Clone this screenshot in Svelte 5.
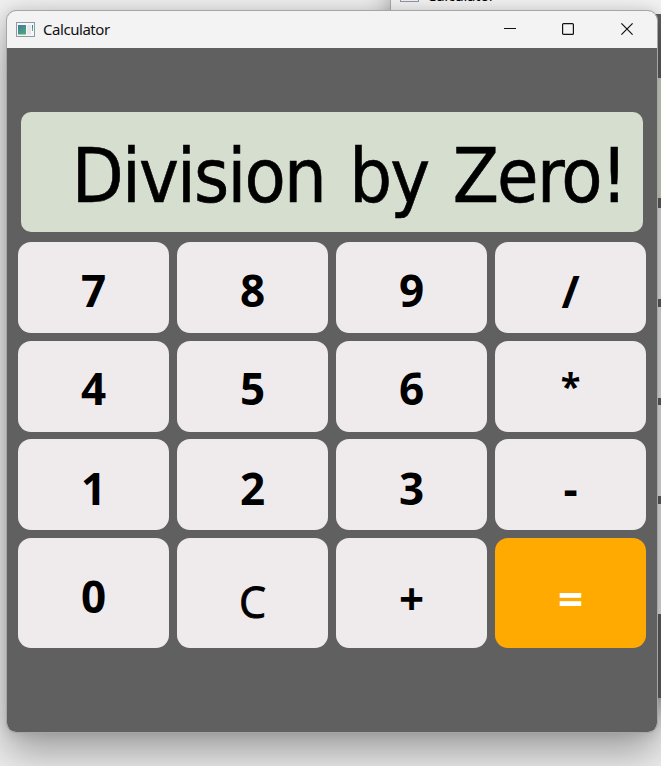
<script>
  const keys = [
    { label: '7' }, { label: '8' }, { label: '9' }, { label: '/', kind: 'slash' },
    { label: '4' }, { label: '5' }, { label: '6' }, { label: '*', kind: 'star' },
    { label: '1', kind: 'low' }, { label: '2', kind: 'low' }, { label: '3', kind: 'low' }, { label: '-', kind: 'minus' },
    { label: '0', kind: 'low' }, { label: 'C', kind: 'clear' }, { label: '+', kind: 'plus' }, { label: '=', kind: 'equals' }
  ];
</script>

<main class="desktop">
  <div class="rear" aria-hidden="true">
    <div class="rear-title">
      <span class="rear-icon"></span><span>Calculator</span>
    </div>
    <div class="rear-body">
      <i class="rear-display"></i>
      <i class="rear-key"></i>
      <i class="rear-key"></i>
      <i class="rear-key"></i>
      <i class="rear-key last"></i>
    </div>
  </div>

  <section class="window">
    <header class="titlebar">
      <svg class="app-icon" width="19" height="15" viewBox="0 0 19 15">
        <defs>
          <linearGradient id="tile" x1="0" y1="0" x2="0.6" y2="1">
            <stop offset="0" stop-color="#3d78a5" />
            <stop offset="1" stop-color="#4da777" />
          </linearGradient>
        </defs>
        <rect x=".5" y=".5" width="18" height="14" fill="#f4f6f7" stroke="#9297a2" />
        <rect x="2" y="3" width="8" height="9.5" fill="url(#tile)" />
        <rect x="11" y="3" width="4" height="9.5" fill="#e5e7e9" />
        <rect x="16" y="3" width="1" height="3" fill="#397fb5" />
        <rect x="16" y="6" width="1" height="3" fill="#57ad76" />
      </svg>
      <h1>Calculator</h1>
      <div class="controls">
        <svg width="12" height="12" viewBox="0 0 12 12"><path d="M0 5.5H12" /></svg>
        <svg width="12" height="12" viewBox="0 0 12 12"><rect x=".6" y=".6" width="10.8" height="10.8" rx="1" /></svg>
        <svg width="12" height="12" viewBox="0 0 12 12"><path d="M.4 .4L11.6 11.6M11.6 .4L.4 11.6" /></svg>
      </div>
    </header>
    <div class="body">
      <output class="display"><span>Division by Zero!</span></output>
      <div class="keypad">
        {#each keys as key}
          <button class={key.kind ?? 'plain'}><span>{key.label}</span></button>
        {/each}
      </div>
    </div>
  </section>
</main>

<style>
  :global(body) { margin: 0; overflow: hidden; }
  .desktop {
    position: relative;
    box-sizing: border-box;
    width: 661px;
    height: 766px;
    padding: 10px 0 0 6px;
    overflow: hidden;
    background: #efefef;
  }
  .rear {
    position: absolute;
    left: 390px;
    top: -24px;
    width: 300px;
    height: 722px;
    border-left: 1px solid #aaa;
    background: #606060;
    box-shadow: 0 8px 24px rgba(0, 0, 0, .3);
  }
  .rear-title {
    display: flex;
    align-items: center;
    gap: 8px;
    height: 38px;
    padding-left: 9px;
    background: #f3f3f3;
    font: 15px/20px "Noto Sans", sans-serif;
    letter-spacing: -.35px;
  }
  .rear-title span { position: relative; top: 0; }
  .rear-icon {
    box-sizing: border-box;
    width: 19px;
    height: 15px;
    border: 1px solid #9297a2;
  }
  .rear-title .rear-icon { top: -1px; }
  .rear-body { display: flex; flex-direction: column; padding-top: 64px; }
  .rear-body i { display: block; width: 100%; flex: none; }
  .rear-display { height: 120px; background: #d6dfcf; margin-bottom: 10px; }
  .rear-key { height: 91px; background: #efebec; margin-bottom: 7.7px; }
  .rear-key.last { height: 110px; }
  .window {
    position: relative;
    box-sizing: border-box;
    width: 652px;
    height: 723px;
    border: 1px solid #a6a6a6;
    border-radius: 10px;
    overflow: hidden;
    background: #606060;
    background-clip: padding-box;
    box-shadow: 0 20px 40px rgba(0, 0, 0, .34), 0 0 14px rgba(0, 0, 0, .12);
  }
  .titlebar {
    display: flex;
    align-items: center;
    box-sizing: border-box;
    height: 37px;
    padding: 0 24px 0 9px;
    background: #f3f3f3;
  }
  .app-icon { flex: none; }
  h1 {
    margin: 0 0 0 8px;
    font: 400 15px/20px "Noto Sans", sans-serif;
    letter-spacing: -.45px;
    color: #111;
    position: relative;
    top: -1px;
  }
  .controls { display: flex; gap: 46.5px; margin: -1px 0 0 auto; }
  .controls svg { fill: none; stroke: #111; stroke-width: 1.2; }
  .controls svg:nth-child(2) { margin: 0 .5px 0 -.5px; }
  .body { padding: 64px 11px 0; }
  .display {
    display: flex;
    align-items: center;
    justify-content: flex-end;
    box-sizing: border-box;
    height: 120px;
    margin: 0 3px 10px;
    padding: 0 17px 0 0;
    border-radius: 10px;
    background: #d6dfcf;
    color: #000;
    font: 400 75px/90px "DejaVu Sans Condensed", "DejaVu Sans", sans-serif;
    font-stretch: condensed;
    letter-spacing: -1.75px;
    word-spacing: 4.5px;
    -webkit-text-stroke: .6px #000;
    white-space: nowrap;
  }
  .display span { position: relative; top: 4px; }
  .keypad {
    display: grid;
    grid-template-columns: repeat(4, 151px);
    grid-template-rows: 91px 91px 91px 110px;
    gap: 7.7px 8px;
  }
  button {
    display: flex;
    align-items: center;
    justify-content: center;
    padding: 0;
    border: 0;
    border-radius: 13px;
    background: #efebec;
    color: #000;
    font: 700 44px/60px "Open Sans", "Noto Sans", sans-serif;
  }
  button span { position: relative; top: 2px; }
  .low span { top: 3px; }
  .slash span { top: 3px; }
  .star { font-size: 36px; }
  .star span { top: 0; }
  .minus span { top: 3px; }
  .plus span { top: 5px; }
  .clear { font-weight: 400; font-size: 43px; -webkit-text-stroke: .9px #000; }
  .clear span { top: 9px; }
  .equals { background: #ffaa00; color: #fff; }
  .equals span { top: 5px; }
</style>
